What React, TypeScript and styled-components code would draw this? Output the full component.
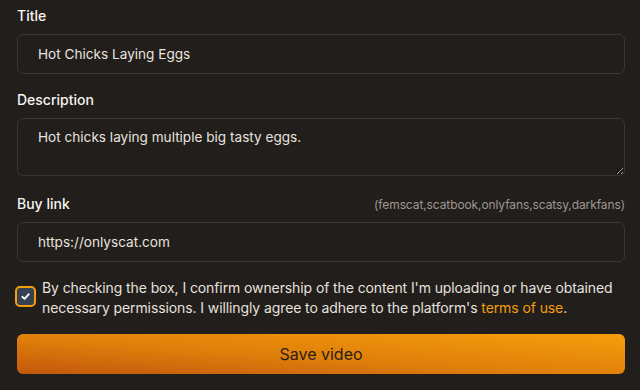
import React from "react";
import styled, { createGlobalStyle } from "styled-components";

const Global = createGlobalStyle`
  html, body { margin: 0; padding: 0; background: #221e1b; color-scheme: dark; }
  body { font-family: Inter, "Noto Sans", sans-serif; }
`;

const Form = styled.form`
  display: flex;
  flex-direction: column;
  padding: 6px 15px 0 17px;
  width: 640px;
  box-sizing: border-box;
`;

const Field = styled.div<{ $gap?: number }>`
  display: flex;
  flex-direction: column;
  gap: 8px;
  margin-bottom: ${(p) => p.$gap ?? 16}px;
`;

const LabelRow = styled.div`
  display: flex;
  justify-content: space-between;
  align-items: center;
  height: 20px;
`;

const Label = styled.label`
  font-size: 14px;
  font-weight: 500;
  color: #f5f2ef;
  line-height: 20px;
`;

const Hint = styled.span`
  font-size: 12px;
  color: #9e9893;
  letter-spacing: -0.1px;
`;

const Input = styled.input`
  height: 40px;
  box-sizing: border-box;
  background: transparent;
  border: 1px solid #3b3633;
  border-radius: 6px;
  padding: 0 20px;
  font: inherit;
  font-size: 13.6px;
  color: #e8e3df;
  outline: none;
`;

const TextArea = styled.textarea`
  height: 58px;
  box-sizing: border-box;
  background: transparent;
  border: 1px solid #3b3633;
  border-radius: 6px;
  padding: 8px 20px;
  font: inherit;
  font-size: 13.6px;
  line-height: 20px;
  color: #e8e3df;
  outline: none;
  resize: vertical;
`;

const Consent = styled.div`
  display: flex;
  gap: 6px;
  align-items: flex-start;
  margin-bottom: 16px;
  margin-left: -2px;
`;

const Box = styled.span`
  flex: none;
  width: 17px;
  height: 17px;
  margin-top: 8px;
  border: 2px solid #f59e0b;
  border-radius: 5px;
  background: #374151;
  display: flex;
  align-items: center;
  justify-content: center;
`;

const ConsentText = styled.p`
  margin: 0;
  font-size: 14px;
  line-height: 20px;
  letter-spacing: -0.1px;
  color: #e6e1dd;
`;

const Link = styled.a`
  color: #f59e0b;
  text-decoration: none;
`;

const SaveButton = styled.button`
  height: 40px;
  border: none;
  border-radius: 6px;
  background: linear-gradient(to top right, #c2570c, #e07f0b 45%, #f59e0b);
  color: #2a1f14;
  font: inherit;
  font-size: 16px;
  cursor: pointer;
`;

export default function App() {
  return (
    <>
      <Global />
      <Form onSubmit={(e) => e.preventDefault()}>
        <Field>
          <LabelRow>
            <Label>Title</Label>
          </LabelRow>
          <Input defaultValue="Hot Chicks Laying Eggs" />
        </Field>
        <Field $gap={18}>
          <LabelRow>
            <Label>Description</Label>
          </LabelRow>
          <TextArea defaultValue="Hot chicks laying multiple big tasty eggs." />
        </Field>
        <Field>
          <LabelRow>
            <Label>Buy link</Label>
            <Hint>(femscat,scatbook,onlyfans,scatsy,darkfans)</Hint>
          </LabelRow>
          <Input defaultValue="https://onlyscat.com" />
        </Field>
        <Consent>
          <Box>
            <svg width="11" height="11" viewBox="0 0 12 12">
              <path d="M2.5 6.3 L5 8.6 L9.6 3.4" fill="none" stroke="#fff" strokeWidth="2" strokeLinecap="round" strokeLinejoin="round" />
            </svg>
          </Box>
          <ConsentText>
            By checking the box, I confirm ownership of the content I'm uploading or have obtained necessary
            permissions. I willingly agree to adhere to the platform's <Link href="#">terms of use</Link>.
          </ConsentText>
        </Consent>
        <SaveButton type="submit">Save video</SaveButton>
      </Form>
    </>
  );
}
